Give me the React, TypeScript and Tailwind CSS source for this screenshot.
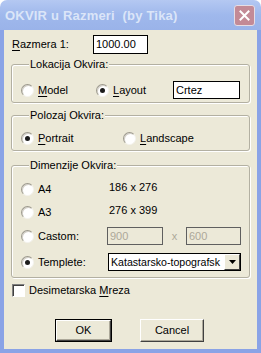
import * as React from "react";

const font = "font-['Liberation_Sans',Arial,sans-serif]";

function Radio({ checked }: { checked?: boolean }) {
  return (
    <span className="flex h-[13px] w-[13px] shrink-0 items-center justify-center rounded-full border border-t-[#9c998d] border-l-[#9c998d] border-b-[#f4f3ee] border-r-[#f4f3ee] bg-white shadow-[inset_1px_1px_0_#d4d0c8]">
      {checked && <span className="h-[5px] w-[5px] rounded-full bg-[#1c1c1c]" />}
    </span>
  );
}

function Check() {
  return (
    <span className="block h-[13px] w-[13px] shrink-0 border border-t-[#808080] border-l-[#808080] border-b-white border-r-white bg-white shadow-[inset_1px_1px_0_#404040]" />
  );
}

function U({ children }: { children: React.ReactNode }) {
  return <span className="underline underline-offset-[2px]">{children}</span>;
}

function Group({
  title,
  className,
  children,
}: {
  title: string;
  className?: string;
  children: React.ReactNode;
}) {
  return (
    <fieldset
      className={`rounded-[3px] border border-[#b3b0a2] shadow-[inset_1px_1px_0_#fff,1px_1px_0_#fff] ${className ?? ""}`}
    >
      <legend className="ml-[8px] bg-[#ece9d8] px-[1px] text-[11px] leading-[13px]">
        {title}
      </legend>
      {children}
    </fieldset>
  );
}

function Button({
  children,
  isDefault,
  className,
}: {
  children: React.ReactNode;
  isDefault?: boolean;
  className?: string;
}) {
  return (
    <button
      className={`flex h-[23px] items-center justify-center bg-[#ece9d8] text-[11px] text-black ${
        isDefault ? "border border-black" : ""
      } ${className ?? ""}`}
    >
      <span className="flex h-full w-full items-center justify-center border border-t-white border-l-white border-b-[#404040] border-r-[#404040] shadow-[inset_-1px_-1px_0_#aca899]">
        {children}
      </span>
    </button>
  );
}

export default function App() {
  return (
    <div className={`flex h-[353px] w-[261px] flex-col ${font} text-black`}>
      {/* title bar */}
      <div className="flex h-[30px] shrink-0 items-center justify-between rounded-t-[7px] bg-gradient-to-b from-[#b4c8f2] via-[#9fb8ec] to-[#9ab3e9] pl-[5px] pr-[6px]">
        <span className="pt-[1px] text-[13px] font-bold tracking-[0.2px] text-[#dbe5f8]">
          OKVIR u Razmeri&nbsp;&nbsp;(by Tika)
        </span>
        <span className="flex h-[21px] w-[21px] items-center justify-center rounded-[3px] border border-[#e6dde4] bg-[#c38a96]">
          <svg width="11" height="11" viewBox="0 0 11 11">
            <path d="M1.5 1.5 L9.5 9.5 M9.5 1.5 L1.5 9.5" stroke="#fff" strokeWidth="2" strokeLinecap="square" />
          </svg>
        </span>
      </div>

      {/* body */}
      <div className="flex flex-1 flex-col border-x-4 border-b-4 border-[#8aa3e6] bg-[#ece9d8] px-[7px] text-[11px] leading-[13px]">
        <div className="mt-[5px] flex h-[19px] items-center">
          <span className="ml-[1px] w-[81px]">
            <U>R</U>azmera 1:
          </span>
          <span className="flex h-[19px] w-[55px] items-center border border-black bg-white px-[2px]">
            1000.00
          </span>
        </div>

        <Group title="Lokacija Okvira:" className="mt-[4px] pb-[3px] pl-[9px]">
          <div className="mt-[10px] flex h-[18px] items-center">
            <div className="flex w-[75px] items-center gap-[4px]">
              <Radio />
              <span>
                <U>M</U>odel
              </span>
            </div>
            <div className="flex w-[77px] items-center gap-[4px]">
              <Radio checked />
              <span>
                <U>L</U>ayout
              </span>
            </div>
            <span className="flex h-[18px] w-[67px] items-center border border-black bg-white px-[2px]">
              Crtez
            </span>
          </div>
        </Group>

        <Group title="Polozaj Okvira:" className="mt-[6px] pb-[4px] pl-[9px]">
          <div className="mt-[8px] flex h-[16px] items-center">
            <div className="flex w-[102px] items-center gap-[4px]">
              <Radio checked />
              <span>
                <U>P</U>ortrait
              </span>
            </div>
            <div className="flex items-center gap-[4px]">
              <Radio />
              <span>
                <U>L</U>andscape
              </span>
            </div>
          </div>
        </Group>

        <Group title="Dimenzije Okvira:" className="mt-[8px] pb-[6px] pl-[9px]">
          <div className="mt-[9px] flex flex-col gap-[7px]">
            <div className="flex h-[16px] items-center">
              <div className="flex w-[88px] items-center gap-[4px]">
                <Radio />
                <span>A4</span>
              </div>
              <span className="self-start">186 x 276</span>
            </div>
            <div className="flex h-[16px] items-center">
              <div className="flex w-[88px] items-center gap-[4px]">
                <Radio />
                <span>A3</span>
              </div>
              <span className="self-start">276 x 399</span>
            </div>
            <div className="flex h-[18px] items-center">
              <div className="flex w-[86px] items-center gap-[4px]">
                <Radio />
                <span>Castom:</span>
              </div>
              <span className="flex h-[18px] w-[56px] items-center border border-[#5f5f5f] bg-[#ece9d8] px-[2px] text-[#aca899]">
                900
              </span>
              <span className="w-[23px] text-center text-[#aca899]">x</span>
              <span className="flex h-[18px] w-[55px] items-center border border-[#5f5f5f] bg-[#ece9d8] px-[2px] text-[#aca899]">
                600
              </span>
            </div>
            <div className="mt-[1px] flex h-[18px] items-center">
              <div className="flex w-[87px] items-center gap-[4px]">
                <Radio checked />
                <span>Templete:</span>
              </div>
              <div className="flex h-[18px] w-[133px] items-center border border-black bg-white">
                <span className="min-w-0 flex-1 whitespace-nowrap pl-[2px] text-[10.6px]">
                  Katastarsko-topografsk
                </span>
                <span className="flex h-full w-[16px] shrink-0 items-center justify-center border border-t-white border-l-white border-b-[#404040] border-r-[#404040] bg-[#ece9d8]">
                  <svg width="7" height="4" viewBox="0 0 7 4">
                    <path d="M0 0 H7 L3.5 4 Z" fill="#000" />
                  </svg>
                </span>
              </div>
            </div>
          </div>
        </Group>

        <div className="mt-[6px] flex items-center gap-[4px] pl-[1px]">
          <Check />
          <span>
            Desimetarska <U>M</U>reza
          </span>
        </div>

        <div className="mt-[22px] flex pl-[44px]">
          <Button isDefault className="w-[57px]">
            OK
          </Button>
          <Button className="ml-[28px] w-[64px]">Cancel</Button>
        </div>
      </div>
    </div>
  );
}
